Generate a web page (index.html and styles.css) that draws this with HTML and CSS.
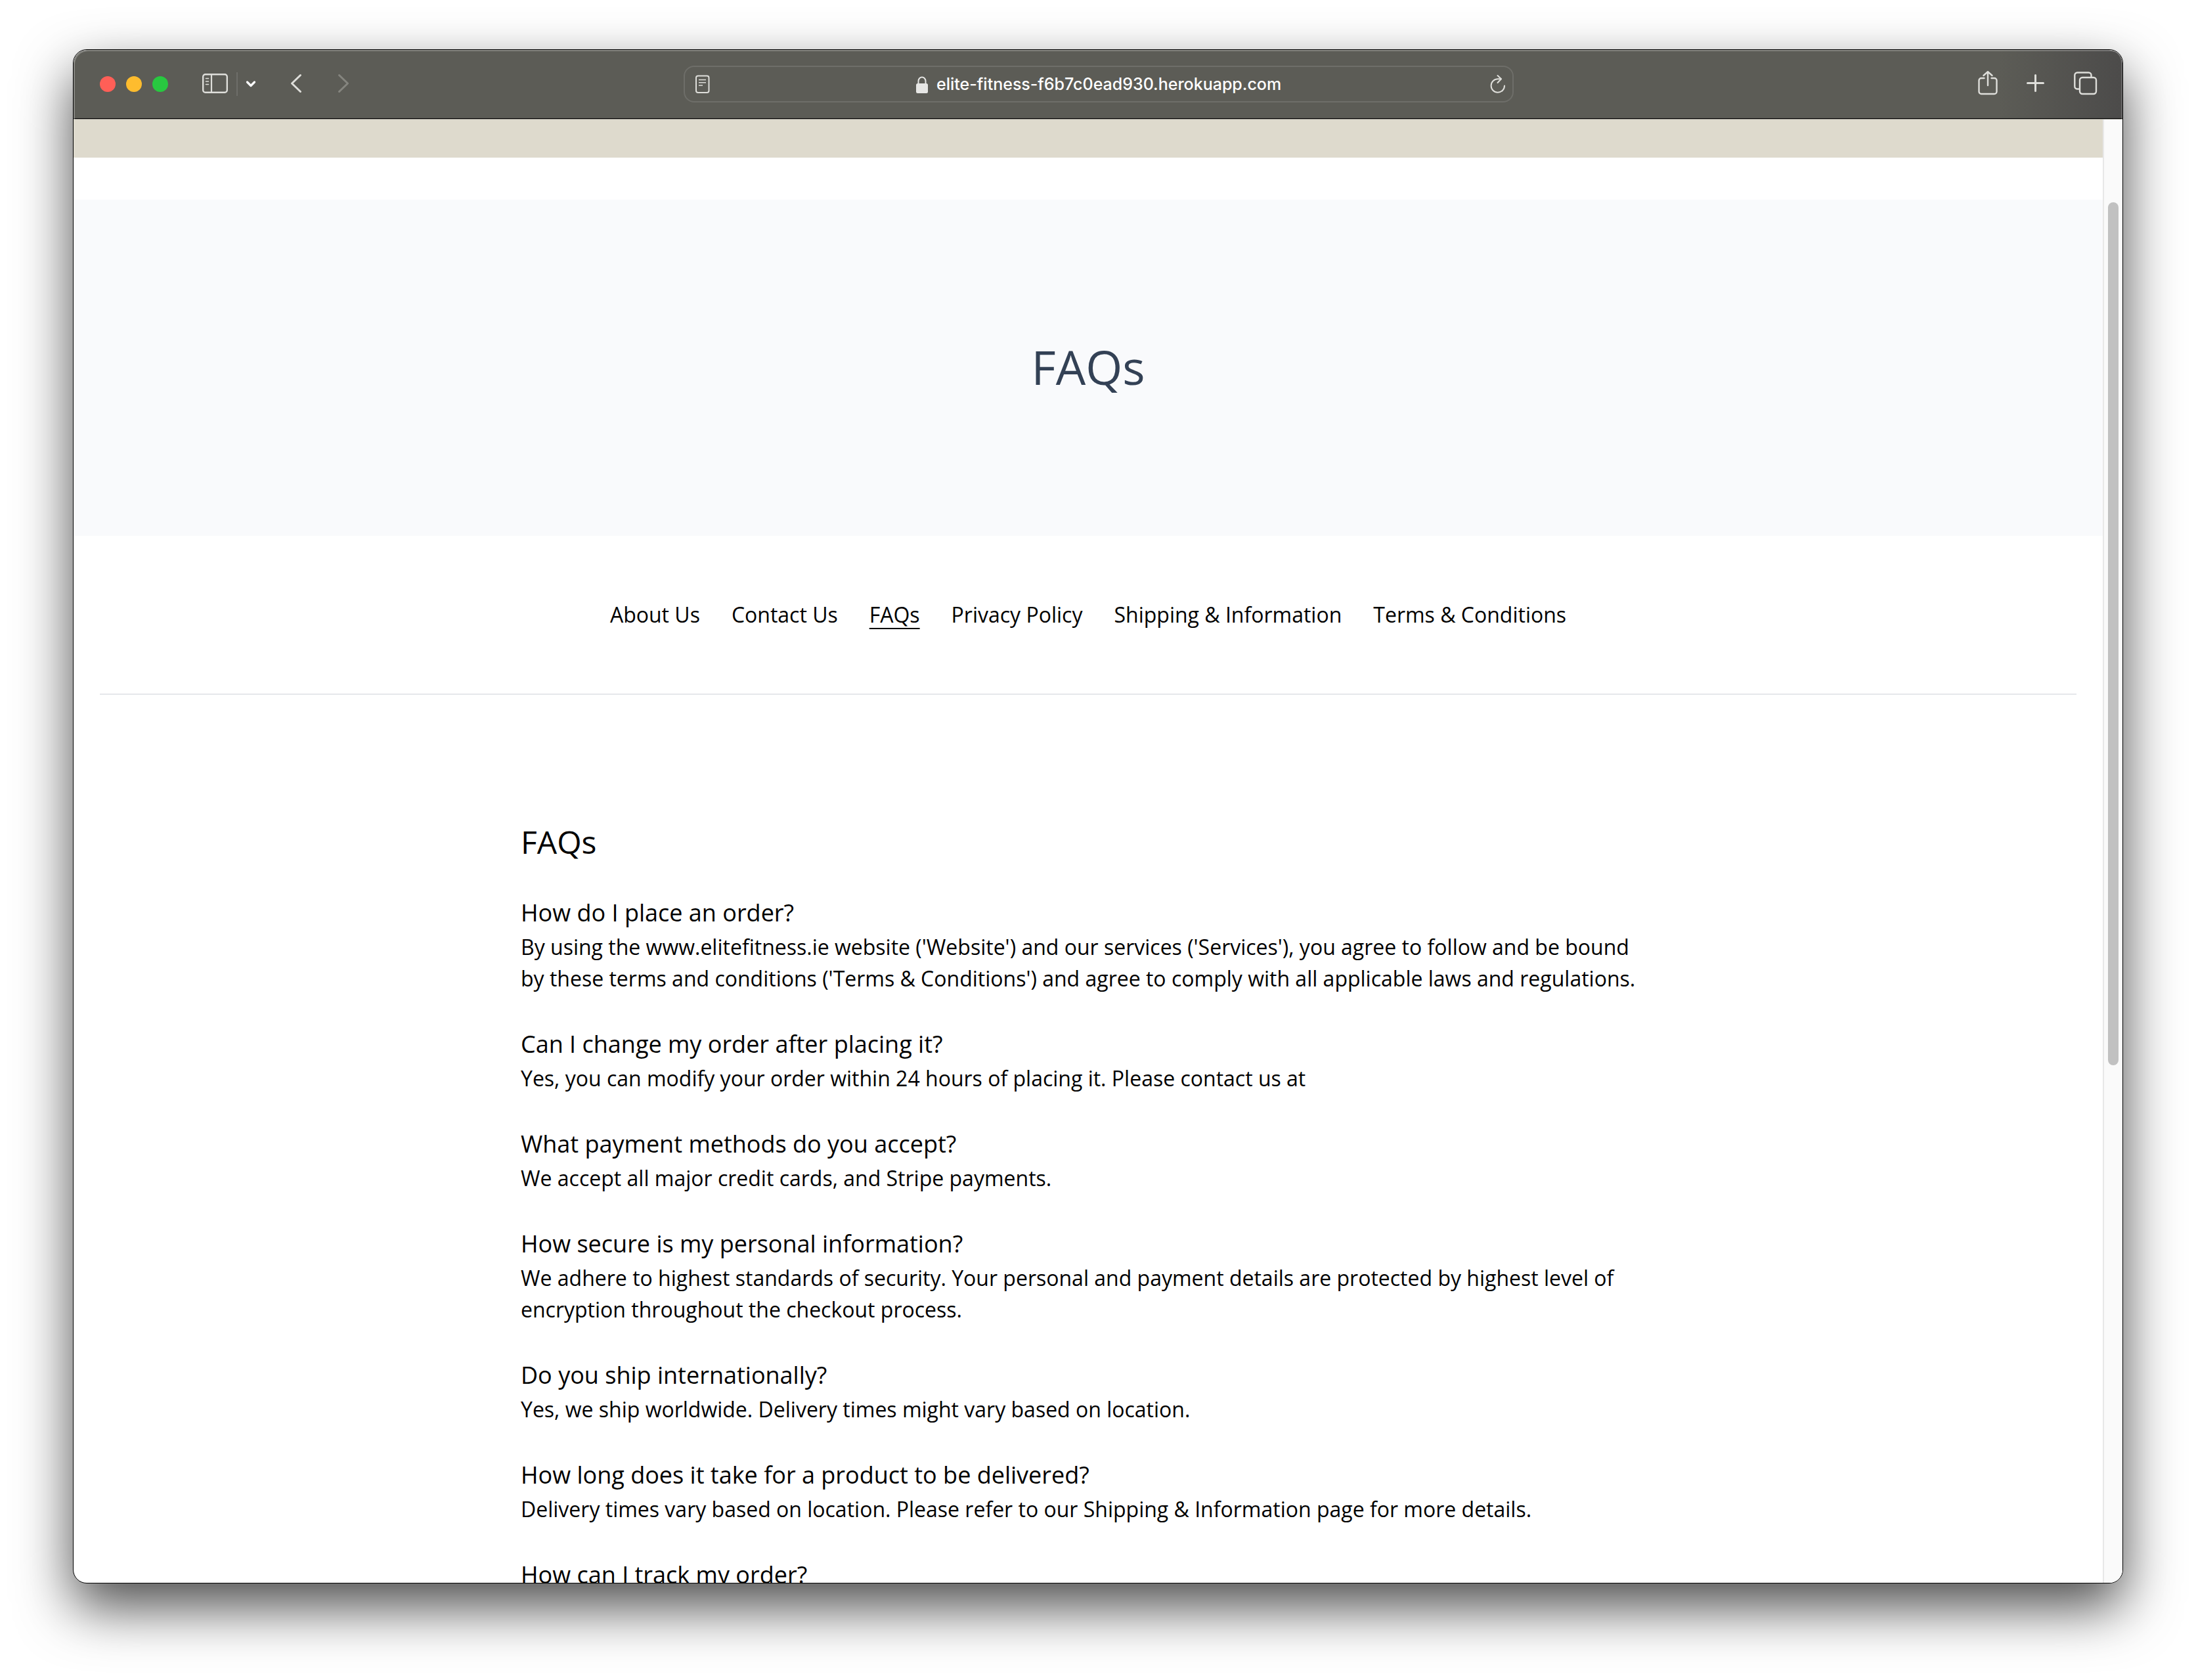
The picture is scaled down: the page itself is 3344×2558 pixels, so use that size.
FILE: index.html
```html
<!DOCTYPE html>
<html lang="en">
<head>
<meta charset="utf-8">
<meta name="viewport" content="width=device-width, initial-scale=1">
<title>FAQs</title>
<link rel="stylesheet" href="styles.css">
</head>
<body>
<div class="window">
  <header class="toolbar">
    <div class="toolbar-left">
      <div class="lights">
        <button class="light light-close" aria-label="Close"></button>
        <button class="light light-minimize" aria-label="Minimize"></button>
        <button class="light light-zoom" aria-label="Zoom"></button>
      </div>
      <div class="sidebar-group">
        <button class="icon-button" aria-label="Show sidebar">
          <svg width="40" height="32" viewBox="0 0 40 32" fill="none" stroke="currentColor">
            <rect x="1.200" y="1.200" width="36.600" height="27.600" rx="3.500" stroke-width="2.400"/>
            <path d="M14 1.200v27.600" stroke-width="2.200"/>
            <path d="M5.500 7.500h4M5.500 12h4M5.500 16.500h4" stroke-width="1.600" stroke-linecap="round"/>
          </svg>
        </button>
        <span class="divider"></span>
        <button class="icon-button icon-bright" aria-label="Tab groups">
          <svg width="16" height="32" viewBox="0 0 16 32" fill="none" stroke="currentColor" stroke-width="3.200" stroke-linecap="round" stroke-linejoin="round"><path d="M2.500 13l5.500 5.500 5.500-5.500"/></svg>
        </button>
      </div>
      <div class="history">
        <button class="icon-button" aria-label="Back">
          <svg width="18" height="32" viewBox="0 0 18 32" fill="none" stroke="currentColor" stroke-width="3" stroke-linecap="round" stroke-linejoin="round"><path d="M15.500 2.500L2.500 15l13 12.500"/></svg>
        </button>
        <button class="icon-button" aria-label="Forward" disabled>
          <svg width="18" height="32" viewBox="0 0 18 32" fill="none" stroke="currentColor" stroke-width="3" stroke-linecap="round" stroke-linejoin="round"><path d="M2.500 2.500L15.500 15l-13 12.500"/></svg>
        </button>
      </div>
    </div>

    <div class="address-bar">
      <button class="icon-button" aria-label="Reader">
        <svg width="24" height="32" viewBox="0 0 24 32" fill="none" stroke="currentColor" stroke-width="2">
          <rect x="1" y="3.500" width="19.500" height="25.500" rx="3"/>
          <path d="M5 9.500h11M5 13.700h11M5 18h6" stroke-width="1.600"/>
        </svg>
      </button>
      <label class="address">
        <svg width="20" height="32" viewBox="0 0 20 32" fill="none" stroke="currentColor">
          <path d="M4.500 16v-4.500a5.500 6 0 0 1 11 0V16" stroke-width="2"/>
          <rect x="1" y="15" width="18" height="15" rx="2.500" fill="currentColor" stroke="none"/>
        </svg>
        <input class="address-input" type="text" aria-label="Address" value="elite-fitness-f6b7c0ead930.herokuapp.com">
      </label>
      <button class="icon-button" aria-label="Reload">
        <svg width="24" height="32" viewBox="0 0 24 32" fill="none" stroke="currentColor" stroke-width="2" stroke-linecap="round" stroke-linejoin="round">
          <path d="M22 18.500a10.200 10.200 0 1 1-10.200-10.200h5"/>
          <path d="M11.500 3l5.500 5.300-5.500 5.700"/>
        </svg>
      </button>
    </div>

    <div class="toolbar-right">
      <button class="icon-button" aria-label="Share">
        <svg width="30" height="40" viewBox="0 0 30 40" fill="none" stroke="currentColor" stroke-width="2.400" stroke-linecap="round" stroke-linejoin="round">
          <path d="M9.500 11H5a3.500 3.500 0 0 0-3.500 3.500v17A3.500 3.500 0 0 0 5 35h20a3.500 3.500 0 0 0 3.500-3.500v-17A3.500 3.500 0 0 0 25 11h-4.500"/>
          <path d="M15 22V1.500M8.500 7L15 1.200 21.500 7"/>
        </svg>
      </button>
      <button class="icon-button" aria-label="New tab">
        <svg width="28" height="40" viewBox="0 0 28 40" fill="none" stroke="currentColor" stroke-width="3" stroke-linecap="round"><path d="M13.500 6.500v24M1.500 18.500h24"/></svg>
      </button>
      <button class="icon-button" aria-label="Show tabs">
        <svg width="36" height="40" viewBox="0 0 36 40" fill="none" stroke="currentColor" stroke-width="2.400" stroke-linejoin="round">
          <rect x="9" y="10" width="25" height="25" rx="4"/>
          <path d="M9 27.500H5a3.700 3.700 0 0 1-3.700-3.700V6.500A4 4 0 0 1 5.300 2.500H22.500A4 4 0 0 1 26.500 6.500V10"/>
        </svg>
      </button>
    </div>
  </header>

  <div class="viewport">
    <div class="page">
      <div class="site-strip"></div>
      <section class="hero">
        <h1 class="hero-title">FAQs</h1>
      </section>
      <nav class="page-nav" aria-label="Information">
        <a href="#about">About Us</a>
        <a href="#contact">Contact Us</a>
        <a href="#faqs" class="current" aria-current="page">FAQs</a>
        <a href="#privacy">Privacy Policy</a>
        <a href="#shipping">Shipping &amp; Information</a>
        <a href="#terms">Terms &amp; Conditions</a>
      </nav>
      <main class="faqs" id="faqs">
        <h2 class="faqs-title">FAQs</h2>
        <section class="faq">
          <h3>How do I place an order?</h3>
          <p>By using the www.elitefitness.ie website ('Website') and our services ('Services'), you agree to follow and be bound by these terms and conditions ('Terms &amp; Conditions') and agree to comply with all applicable laws and regulations.</p>
        </section>
        <section class="faq">
          <h3>Can I change my order after placing it?</h3>
          <p>Yes, you can modify your order within 24 hours of placing it. Please contact us at</p>
        </section>
        <section class="faq">
          <h3>What payment methods do you accept?</h3>
          <p>We accept all major credit cards, and Stripe payments.</p>
        </section>
        <section class="faq">
          <h3>How secure is my personal information?</h3>
          <p>We adhere to highest standards of security. Your personal and payment details are protected by highest level of encryption throughout the checkout process.</p>
        </section>
        <section class="faq">
          <h3>Do you ship internationally?</h3>
          <p>Yes, we ship worldwide. Delivery times might vary based on location.</p>
        </section>
        <section class="faq">
          <h3>How long does it take for a product to be delivered?</h3>
          <p>Delivery times vary based on location. Please refer to our Shipping &amp; Information page for more details.</p>
        </section>
        <section class="faq">
          <h3>How can I track my order?</h3>
        </section>
      </main>
    </div>
    <div class="scrollbar" aria-hidden="true"><div class="thumb"></div></div>
  </div>
</div>
</body>
</html>
```
FILE: styles.css
```css
* {
  box-sizing: border-box;
  margin: 0;
  padding: 0;
}

body {
  display: flex;
  height: 100vh;
  padding: 75px 111px 147px;
  background: #fff;
  color: #000;
  font-family: "Open Sans", sans-serif;
  font-size: 32px;
  line-height: 48px;
  overflow: hidden;
}

.window {
  flex: 1;
  min-width: 0;
  display: flex;
  flex-direction: column;
  border: 1px solid #000;
  border-radius: 21px;
  background: #fff;
  box-shadow: 0 36px 84px rgba(0, 0, 0, 0.7);
  overflow: hidden;
}

/* Browser toolbar */
.toolbar {
  display: grid;
  grid-template-columns: 1fr minmax(0, 1264px) 1fr;
  align-items: center;
  height: 106px;
  padding: 0 38px 2px 40px;
  border-radius: 20px 20px 0 0;
  background: linear-gradient(to right, #5c5c56 94%, #4c4b4a);
  box-shadow: inset 2px 2px 0 rgba(255, 255, 255, 0.25), inset -2px 0 0 rgba(255, 255, 255, 0.15), inset 0 -1px 0 #a3a199, inset 0 -2px 0 #000;
}

.toolbar-left,
.toolbar-right,
.sidebar-group,
.history {
  display: flex;
  align-items: center;
}

.toolbar-left {
  gap: 52px;
}

.toolbar-right {
  justify-content: flex-end;
  gap: 44px;
}

.lights {
  display: flex;
  gap: 16px;
}

.light {
  width: 24px;
  height: 24px;
  border: 0;
  border-radius: 50%;
}

.light-close { background: #ff5f57; }
.light-minimize { background: #febc2e; }
.light-zoom { background: #28c840; }

.sidebar-group {
  gap: 12px;
}

.history {
  gap: 54px;
}

.divider {
  width: 2px;
  height: 36px;
  background: #6e6e69;
}

.icon-button {
  display: flex;
  border: 0;
  background: none;
  color: #dededa;
}

.icon-button:disabled {
  color: #85857f;
}

.icon-bright {
  color: #fff;
}

.address-bar {
  display: flex;
  align-items: center;
  justify-content: space-between;
  height: 56px;
  padding: 0 10px 0 16px;
  border: 2px solid #6e6e69;
  border-radius: 16px;
  color: #e6e6e4;
}

.address {
  display: flex;
  align-items: center;
  gap: 12px;
}

.address-input {
  width: 532px;
  height: 40px;
  border: 0;
  background: none;
  color: #fff;
  font: 500 25px/40px Inter, sans-serif;
}

/* Page area */
.viewport {
  flex: 1;
  min-height: 0;
  display: flex;
}

.page {
  flex: 1;
  min-width: 0;
  overflow: hidden;
}

.site-strip {
  height: 58px;
  background: #dedacd;
}

.hero {
  margin-top: 64px;
  padding: 214px 40px 218px;
  background: #f9fafc;
}

.hero-title {
  color: #334155;
  font-size: 72px;
  font-weight: 400;
  line-height: 80px;
  text-align: center;
}

.page-nav {
  display: flex;
  flex-wrap: wrap;
  justify-content: center;
  gap: 48px;
  margin: 0 40px;
  padding: 96px 0;
  border-bottom: 2px solid #e5e7eb;
}

.page-nav a {
  color: inherit;
  text-decoration: none;
}

.page-nav .current {
  text-decoration: underline 2px;
  text-decoration-skip-ink: none;
  text-underline-offset: 8px;
}

.faqs {
  max-width: 1792px;
  margin: 0 auto;
  padding: 192px 32px;
}

.faqs-title {
  margin-bottom: 48px;
  font-size: 48px;
  font-weight: 400;
  line-height: 64px;
}

.faq {
  margin-bottom: 48px;
}

.faq h3 {
  font-size: 36px;
  font-weight: 400;
  line-height: 56px;
}

.scrollbar {
  width: 30px;
  padding: 126px 6px 0;
  border-left: 2px solid #e8e8e8;
  background: #fafafa;
}

.thumb {
  width: 16px;
  height: 62.5%;
  border-radius: 8px;
  background: #c1c1c1;
}
```
